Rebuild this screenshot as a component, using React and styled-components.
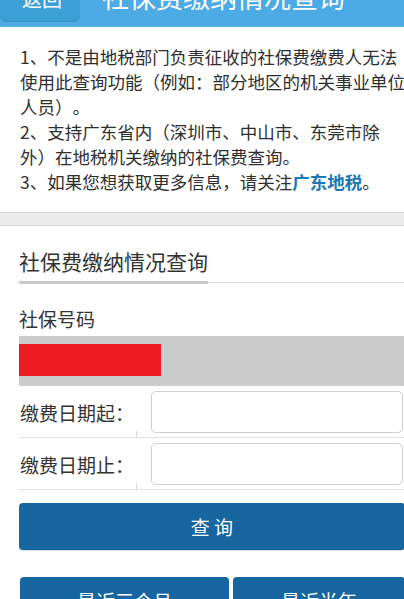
import React from "react";
import styled, { createGlobalStyle } from "styled-components";

const GlobalStyle = createGlobalStyle`
  html, body {
    margin: 0;
    padding: 0;
    background: #fff;
    overflow-x: hidden;
  }
  body {
    font-family: "Noto Sans CJK SC", "Noto Sans", sans-serif;
    color: #333;
    text-spacing-trim: space-all;
  }
`;

const notices = [
  { no: "1", text: "不是由地税部门负责征收的社保费缴费人无法使用此查询功能（例如：部分地区的机关事业单位人员）。" },
  { no: "2", text: "支持广东省内（深圳市、中山市、东莞市除外）在地税机关缴纳的社保费查询。" },
];

const App = () => {
  return (
    <Page>
      <GlobalStyle />
      <Header>
        <BackButton>返回</BackButton>
        <HeaderTitle>社保费缴纳情况查询</HeaderTitle>
      </Header>

      <Notice>
        {notices.map((n) => (
          <NoticeItem key={n.no}>
            {n.no}、{n.text}
          </NoticeItem>
        ))}
        <NoticeItem>
          3、如果您想获取更多信息，请关注<Link>广东地税</Link>。
        </NoticeItem>
      </Notice>

      <Divider />

      <Form>
        <TitleBar>
          <Title>社保费缴纳情况查询</Title>
        </TitleBar>

        <FieldLabel>社保号码</FieldLabel>
        <NumberBox>
          <Redacted />
        </NumberBox>

        <DateRow>
          <DateLabel>缴费日期起：</DateLabel>
          <DateInput />
        </DateRow>
        <DateRow>
          <DateLabel>缴费日期止：</DateLabel>
          <DateInput />
        </DateRow>

        <QueryButton>查 询</QueryButton>

        <QuickRow>
          <QueryButton $small>最近三个月</QueryButton>
          <QueryButton $small>最近半年</QueryButton>
        </QuickRow>
      </Form>
    </Page>
  );
};

export default App;

const Page = styled.div`
  width: 424px;
`;

const Header = styled.header`
  display: flex;
  align-items: flex-start;
  height: 59px;
  margin-top: -32px;
  background: #4caae5;
  border-bottom: 1px solid #5fb4e8;
  box-sizing: border-box;
`;

const BackButton = styled.div`
  width: 80px;
  height: 53px;
  box-sizing: border-box;
  padding: 21px 0 0 22px;
  line-height: 20px;
  font-size: 20px;
  color: #fff;
  background: #3d9fd8;
  border-radius: 0 0 7px 7px;
  box-shadow: 0 1px 0 #3590c6;
`;

const HeaderTitle = styled.h1`
  margin: 0 0 0 22px;
  font-size: 27px;
  font-weight: normal;
  line-height: 57px;
  color: #fff;
`;

const Notice = styled.section`
  padding: 17px 14px 18px 20px;
  font-size: 17.5px;
  line-height: 25px;
  color: #2e2e2e;
`;

const NoticeItem = styled.div``;

const Link = styled.span`
  color: #1a78b6;
  font-weight: bold;
`;

const Divider = styled.div`
  height: 14px;
  box-sizing: border-box;
  background: #ececec;
  border-top: 1px solid #d4d4d4;
  border-bottom: 1px solid #d8d8d8;
`;

const Form = styled.section`
  padding: 20px 19px 0 19px;
`;

const TitleBar = styled.div`
  display: flex;
  border-bottom: 1px solid #e0e0e0;
`;

const Title = styled.h2`
  margin: 0 0 -2px;
  padding-bottom: 5px;
  font-size: 21px;
  font-weight: normal;
  line-height: 30px;
  color: #333;
  border-bottom: 3px solid #c9c9c9;
`;

const FieldLabel = styled.div`
  margin-top: 23px;
  font-size: 19px;
  line-height: 26px;
  color: #333;
`;

const NumberBox = styled.div`
  margin-top: 4px;
  padding: 8px 0 10px;
  background: #cdcccd;
`;

const Redacted = styled.div`
  width: 142px;
  height: 32px;
  background: #ed1c24;
`;

const DateRow = styled.div`
  display: grid;
  grid-template-columns: 118px 1fr;
  align-items: center;
  padding: 5px 0 4px;
  border-bottom: 1px solid #e2e2e2;
`;

const DateLabel = styled.div`
  position: relative;
  align-self: stretch;
  display: flex;
  align-items: center;
  padding-left: 1px;
  font-size: 19px;
  color: #333;

  &::after {
    content: "";
    position: absolute;
    right: 0;
    bottom: -4px;
    width: 1px;
    height: 6px;
    background: #d6d6d6;
  }
`;

const DateInput = styled.input`
  height: 42px;
  margin: 0 2px 0 14px;
  box-sizing: border-box;
  border: 1px solid #cfcfcf;
  border-radius: 5px;
  background: #fff;
  outline: none;
`;

const QueryButton = styled.button`
  display: block;
  width: 100%;
  height: 47px;
  margin-top: ${(p) => (p.$small ? 0 : "13px")};
  border: none;
  border-radius: 4px;
  background: #17669f;
  color: #fff;
  font-family: inherit;
  font-size: 19px;
  box-shadow: 0 1px 1px rgba(0, 0, 0, 0.15);
`;

const QuickRow = styled.div`
  display: grid;
  grid-template-columns: 209px 1fr;
  gap: 4px;
  margin: 27px 0 0 1px;
`;
